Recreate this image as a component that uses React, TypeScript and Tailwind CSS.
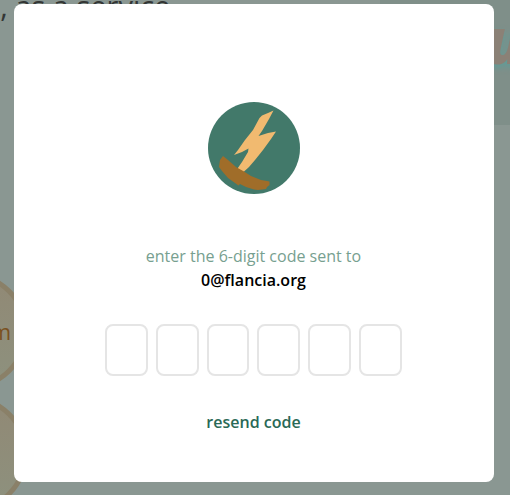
import { useState } from "react";

const DIGITS = [0, 1, 2, 3, 4, 5];

function Logo() {
  return (
    <svg viewBox="0 0 92 92" className="size-[92px]" role="img" aria-label="logo">
      <circle cx="46" cy="46" r="46" fill="#42796a" />
      <path
        d="M65.500 8.500 L60 11 L54 13.500 L51.500 16 L45 28 L37 38 L30 48 L26 53 L34 50 L40.500 46.500 L40 50 L34 60 L29.500 66.500 L35.500 70 L41 65 L47 58 L55 48 L63 37 L68 29.500 L60 31 L50.500 34 L54 29 L61 17 Z"
        fill="#f1ba70"
      />
      <path
        d="M15 54 L20 58 L28 65 L36 69.500 L43 74 L53 78 L59 79 L61.500 79.500 L61.500 83 L59 85 L58 87 L50 88 L46 87.500 L38 85 L32 82 L30.500 83.500 L27 81 L20 76 L14 69 L11 65 L12 58 Z"
        fill="#a06d29"
      />
    </svg>
  );
}

function Backdrop() {
  return (
    <div aria-hidden="true" className="absolute inset-0 flex overflow-hidden">
      <div className="flex w-[380px] shrink-0 flex-col">
        <p className="-mt-3.5 -ml-4 h-[286px] shrink-0 text-[29px] leading-10 whitespace-nowrap text-[#333635]">
          e, as a service
        </p>
        <div className="-ml-[90px] flex shrink-0 flex-col gap-[5px]">
          <div className="flex size-[118px] shrink-0 items-center justify-end rounded-full border-[5px] border-[#8a8068] bg-linear-to-b from-[#918975] to-[#8d917e] pr-3 text-[22px] text-[#7a511f]">
            m
          </div>
          <div className="size-[118px] shrink-0 rounded-full border-[5px] border-[#8a8068] bg-linear-to-b from-[#918975] to-[#8d917e]" />
        </div>
      </div>
      <div className="h-[125px] flex-1 bg-[#7f8f89] pl-[105px] text-[64px] leading-[80px] font-extrabold text-[#8b8176] italic [text-shadow:0_3px_6px_#5f9d98]">
        u
      </div>
    </div>
  );
}

export default function App() {
  const [code, setCode] = useState<string[]>(DIGITS.map(() => ""));

  return (
    <main className="relative min-h-screen bg-[#8a9792] pt-1 pr-4 pb-3 pl-3.5 font-['Open_Sans',sans-serif]">
      <Backdrop />
      <form
        role="dialog"
        aria-label="enter code"
        onSubmit={(e) => e.preventDefault()}
        className="relative mx-auto flex w-full max-w-[480px] flex-col items-center rounded-lg bg-white pt-[98px] pr-[25px] pb-12 pl-6"
      >
        <Logo />
        <p className="mt-[50px] text-center text-base text-[#77a090]">
          enter the 6-digit code sent to
          <br />
          <strong className="font-semibold text-black">0@flancia.org</strong>
        </p>
        <div className="mt-8 flex w-full max-w-[297px] gap-2">
          {DIGITS.map((i) => (
            <input
              key={i}
              aria-label={`digit ${i + 1}`}
              inputMode="numeric"
              maxLength={1}
              value={code[i]}
              onChange={(e) => setCode(code.map((c, n) => (n === i ? e.target.value : c)))}
              className="h-[52px] w-full min-w-0 flex-1 rounded-lg border-2 border-[#e5e5e5] text-center text-xl"
            />
          ))}
        </div>
        <button type="button" className="mt-[34px] text-base font-semibold text-[#2a6956]">
          resend code
        </button>
      </form>
    </main>
  );
}
